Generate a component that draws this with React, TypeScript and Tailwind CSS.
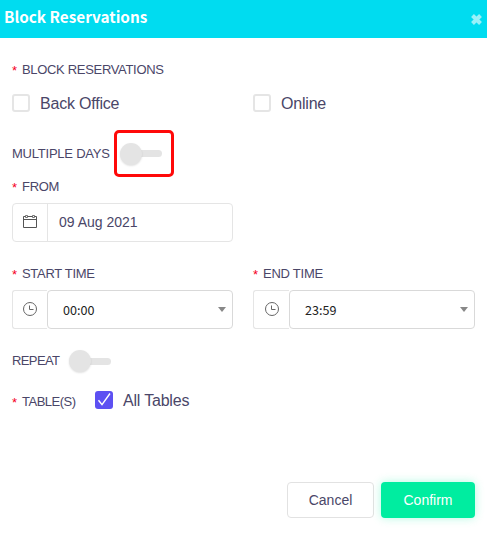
import React from "react";
import clsx from "clsx";

const Label = ({
  children,
  required,
  className,
}: {
  children: string;
  required?: boolean;
  className?: string;
}) => (
  <div className="flex h-5 items-center pt-[2px] text-[13px] leading-5 whitespace-nowrap">
    {required && <span className="w-[10px] shrink-0 pt-[2px] text-[#f5001d]">*</span>}
    <span className={className}>{children}</span>
  </div>
);

const Checkbox = ({ label, checked }: { label: string; checked?: boolean }) => (
  <div className="flex h-5 items-center gap-[10px]">
    <div
      className={clsx(
        "grid h-[18px] w-[18px] shrink-0 place-items-center rounded-[3px]",
        checked ? "bg-[#5d50f2]" : "border-2 border-[#e5e5e5] bg-white",
      )}
    >
      {checked && (
        <svg width="18" height="18" viewBox="0 0 18 18" fill="none">
          <path d="M3.5 9.3 7 13.7 15 2.5" stroke="white" strokeWidth="1.4" />
        </svg>
      )}
    </div>
    <span className="pt-[2px] text-[16px] leading-5 tracking-[-0.2px]">{label}</span>
  </div>
);

const Switch = () => (
  <div className="flex h-[22px] w-[42px] items-center">
    <div className="z-10 h-[22px] w-[22px] shrink-0 rounded-full bg-[#e4e4e4] shadow-[0_1px_2px_rgba(0,0,0,0.12)]" />
    <div className="-ml-1 h-[7px] flex-1 rounded-r-full bg-[#e4e4e4]" />
  </div>
);

const CalendarIcon = () => (
  <svg width="14" height="14" viewBox="0 0 14 14" fill="none" stroke="#555">
    <path d="M2.5 1.5h-2v11h13v-11h-2M4.5 1.5h5M.5 4.5h13" />
    <path d="M2.5.5h2v2h-2zM9.5.5h2v2h-2z" strokeWidth="0.8" />
  </svg>
);

const ClockIcon = () => (
  <svg width="14" height="14" viewBox="0 0 14 14" fill="none" stroke="#666">
    <circle cx="7" cy="7" r="6.5" />
    <path d="M6.5 3.5v4h4" />
  </svg>
);

const TimeSelect = ({ value, addonClass }: { value: string; addonClass: string }) => (
  <div className="flex h-[39px]">
    <div
      className={clsx(
        "grid shrink-0 place-items-center rounded-l-[3px] border border-r-0 border-[#e5e5e5] pb-px",
        addonClass,
      )}
    >
      <ClockIcon />
    </div>
    <div className="flex flex-1 items-center justify-between rounded-[4px] border border-[#d9d9d9] pr-[6px] pl-[15px]">
      <span className="pt-px font-['Noto_Sans_CJK_JP',sans-serif] text-[12.6px] leading-5 text-[#222]">
        {value}
      </span>
      <svg width="8" height="5" viewBox="0 0 8 5" fill="#888">
        <path d="M0 0h8L4 5z" />
      </svg>
    </div>
  </div>
);

const App = () => {
  return (
    <div className="h-[534px] w-[487px] overflow-hidden bg-white font-['Liberation_Sans',Arial,sans-serif] text-[#4a4668]">
      <div className="flex h-[38px] items-center justify-between bg-[#00dcf0] pr-[4px] pl-[4px] text-white">
        <h4 className="pb-[6px] font-['Noto_Sans_CJK_JP',sans-serif] text-[15.3px] leading-6 font-bold">
          Block Reservations
        </h4>
        <svg width="13" height="13" viewBox="0 0 13 13" className="opacity-60">
          <path d="m2.5 2.5 8 8m0-8-8 8" stroke="white" strokeWidth="4" />
        </svg>
      </div>

      <div className="pt-[21px] pr-3 pl-3">
        <Label required className="tracking-[-0.32px]">
          BLOCK RESERVATIONS
        </Label>
        <div className="mt-[14px] grid grid-cols-[221px_222px] gap-[20px]">
          <Checkbox label="Back Office" />
          <Checkbox label="Online" />
        </div>

        <div className="mt-[17px] flex h-[47px] items-center">
          <div className="w-[98px] pb-px">
            <Label className="tracking-[-0.23px]">MULTIPLE DAYS</Label>
          </div>
          <div className="ml-1 flex h-[47px] w-[60px] items-center rounded-[5px] border-3 border-[#ff0909] pl-[3px]">
            <Switch />
          </div>
        </div>

        <div className="-mt-px">
          <Label required className="tracking-[-0.3px]">
            FROM
          </Label>
        </div>
        <div className="mt-[7px] flex h-[39px] w-[221px] rounded-[4px] border border-[#e5e5e5]">
          <div className="grid w-[35px] shrink-0 place-items-center border-r border-[#e5e5e5] pb-px">
            <CalendarIcon />
          </div>
          <span className="pl-[11px] text-[14px] leading-[37px]">09 Aug 2021</span>
        </div>

        <div className="mt-[21px] grid grid-cols-[221px_222px] gap-[20px]">
          <div>
            <Label required className="tracking-[-0.3px]">
              START TIME
            </Label>
            <div className="mt-[7px]">
              <TimeSelect value="00:00" addonClass="w-[35px]" />
            </div>
          </div>
          <div>
            <Label required className="tracking-[-0.25px]">
              END TIME
            </Label>
            <div className="mt-[7px]">
              <TimeSelect value="23:59" addonClass="w-[36px]" />
            </div>
          </div>
        </div>

        <div className="mt-[21px] flex h-[22px] items-center">
          <div className="w-[57px] pb-[2px]">
            <Label className="tracking-[-0.6px]">REPEAT</Label>
          </div>
          <Switch />
        </div>

        <div className="mt-[18px] flex h-5 items-center">
          <div className="w-[83px] pt-px">
            <Label required className="tracking-[-0.5px]">
              TABLE(S)
            </Label>
          </div>
          <Checkbox label="All Tables" checked />
        </div>

        <div className="mt-[72px] flex justify-end gap-[7px] text-[14px]">
          <button className="h-9 w-[87px] rounded-[4px] border border-[#e2e2e2]">Cancel</button>
          <button className="h-9 w-[94px] rounded-[4px] bg-[#00eda0] text-white shadow-[0_0_10px_rgba(0,237,160,0.3)]">
            Confirm
          </button>
        </div>
      </div>
    </div>
  );
};

export default App;
